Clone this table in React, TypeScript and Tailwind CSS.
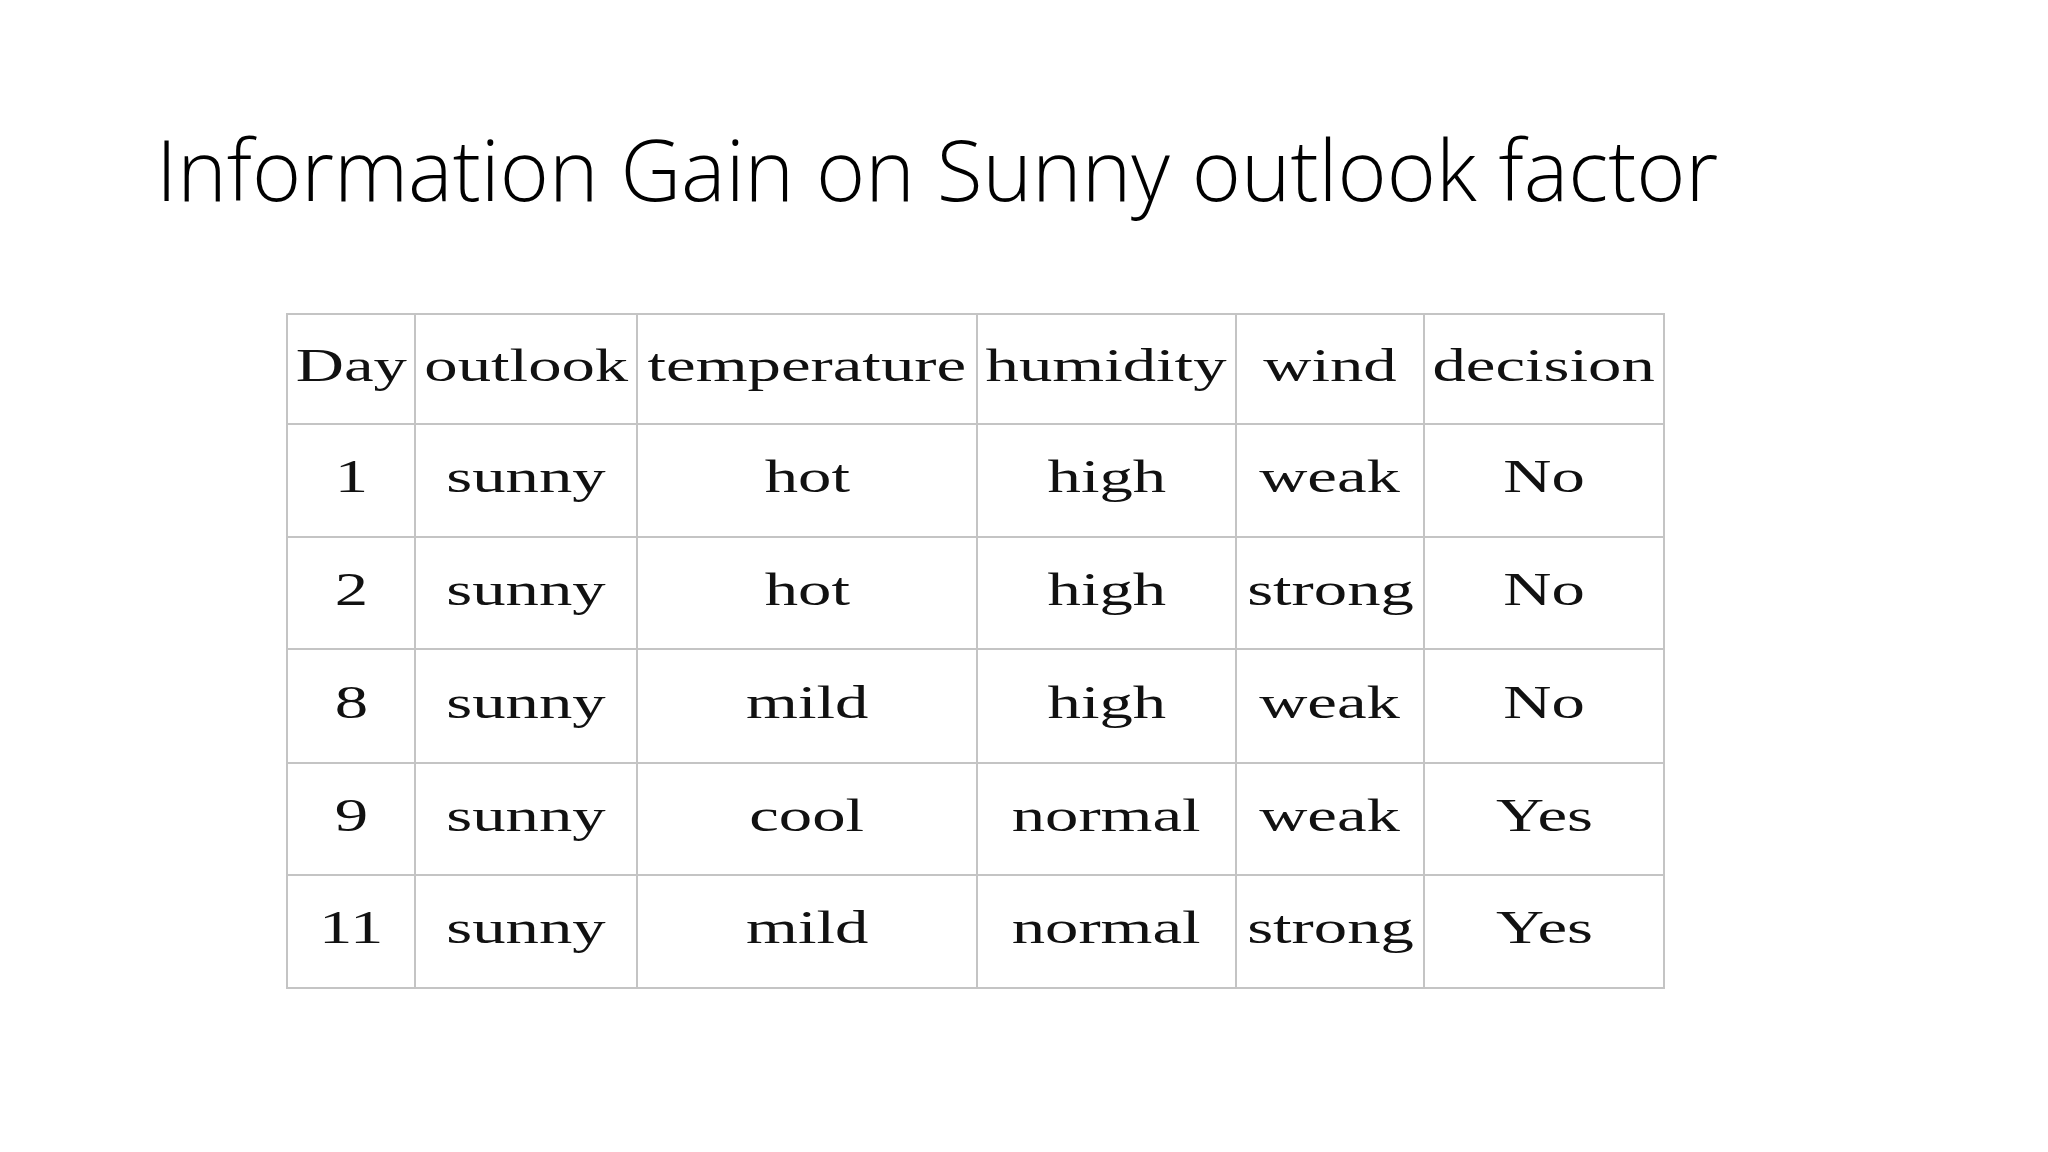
import React from 'react';

const headers = ['Day', 'outlook', 'temperature', 'humidity', 'wind', 'decision'];

const rows = [
  ['1', 'sunny', 'hot', 'high', 'weak', 'No'],
  ['2', 'sunny', 'hot', 'high', 'strong', 'No'],
  ['8', 'sunny', 'mild', 'high', 'weak', 'No'],
  ['9', 'sunny', 'cool', 'normal', 'weak', 'Yes'],
  ['11', 'sunny', 'mild', 'normal', 'strong', 'Yes'],
];

const rowHeights = ['h-[113px]', 'h-[112px]', 'h-[114px]', 'h-[112px]', 'h-[113px]'];

const Cell = ({ text }: { text: string }) => (
  <td className="border-2 border-[#c4c4c4] p-0 text-center align-middle">
    <span className="inline-block scale-x-[1.45] -translate-y-[4px] whitespace-nowrap">{text}</span>
  </td>
);

export default function App() {
  return (
    <div className="w-[2048px] h-[1152px] bg-white overflow-hidden flex flex-col">
      {/* Slide title */}
      <h1 className="pl-[156px] pt-[127px] text-[84px] leading-none font-light text-black font-['Open_Sans',sans-serif]">
        Information Gain on Sunny outlook factor
      </h1>

      {/* Table (pasted image of a table in the slide) */}
      <div className="pl-[286px] pt-[102px]">
        <table className="table-fixed border-collapse w-[1379px] text-[46px] text-[#111111] font-['Liberation_Serif',serif]">
          <colgroup>
            <col className="w-[128px]" />
            <col className="w-[222px]" />
            <col className="w-[340px]" />
            <col className="w-[259px]" />
            <col className="w-[188px]" />
            <col className="w-[240px]" />
          </colgroup>
          <thead>
            <tr className="h-[110px]">
              {headers.map(h => (
                <Cell key={h} text={h} />
              ))}
            </tr>
          </thead>
          <tbody>
            {rows.map((r, i) => (
              <tr key={i} className={rowHeights[i]}>
                {r.map((c, j) => (
                  <Cell key={j} text={c} />
                ))}
              </tr>
            ))}
          </tbody>
        </table>
      </div>
    </div>
  );
}
